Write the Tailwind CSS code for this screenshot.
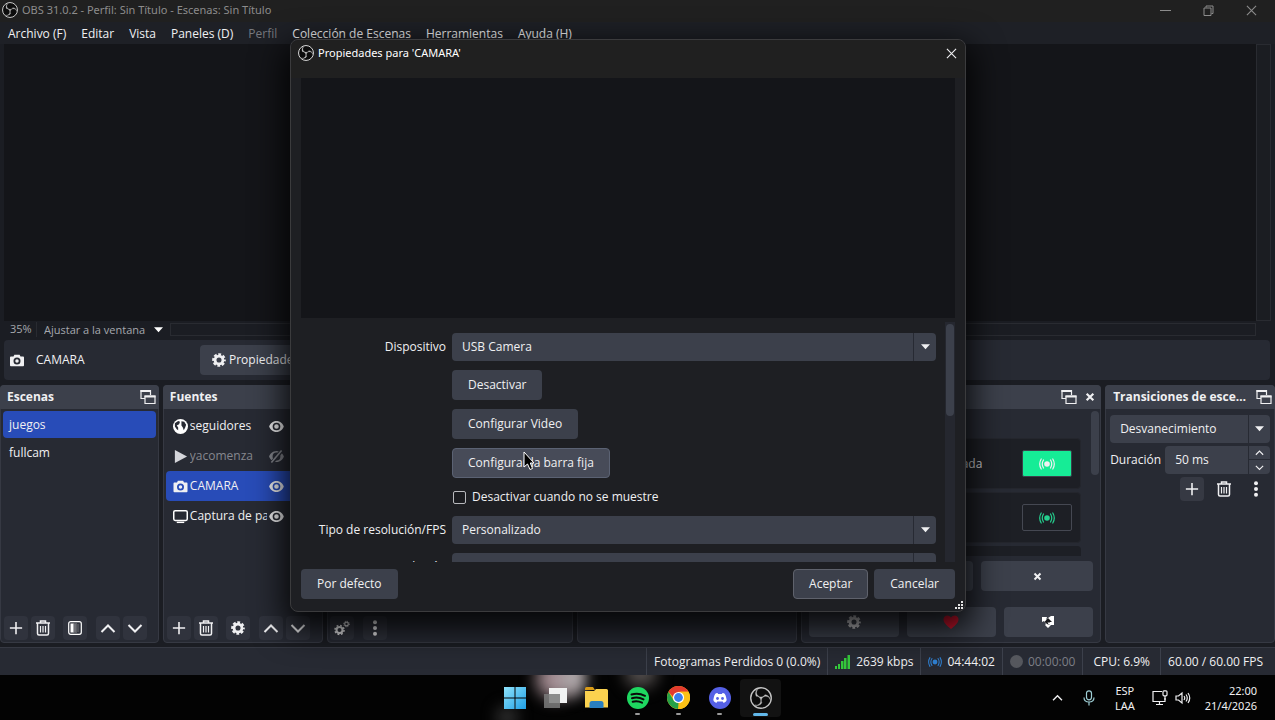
<!DOCTYPE html>
<html lang="es">
<head>
  <meta charset="UTF-8">
  <meta name="viewport" content="width=device-width, initial-scale=1">
  <title>OBS 31.0.2 - Perfil: Sin Título - Escenas: Sin Título</title>
  <script src="https://cdn.jsdelivr.net/npm/@tailwindcss/browser@4"></script>
</head>
<body class="relative min-h-screen flex flex-col overflow-hidden bg-[#1b1d23] text-[#f0f0f2] font-['Open_Sans',sans-serif] text-xs">

  <!-- shared icons -->
  <svg class="hidden">
    <symbol id="obs" viewBox="0 0 24 24">
      <circle cx="12" cy="12" r="11.200" fill="#0c0c0c" stroke="currentColor" stroke-width="1.500"/>
      <path fill="currentColor" stroke="currentColor" stroke-width=".4" d="M6.182 5.990c.352-1.698 1.503-3.229 3.050-3.996-.269.273-.595.483-.844.780-1.020 1.100-1.480 2.692-1.199 4.156.355 2.235 2.455 4.060 4.732 4.028 1.765.079 3.485-.937 4.348-2.468 1.848.063 3.645 1.017 4.700 2.548.540.799.962 1.736.991 2.711-.342-1.295-1.202-2.446-2.375-3.095-1.135-.639-2.529-.802-3.772-.425-1.560.448-2.849 1.723-3.293 3.293-.377 1.250-.216 2.628.377 3.772-.825 1.429-2.315 2.449-3.932 2.756-1.244.261-2.551.059-3.709-.464 1.036.302 2.161.355 3.191-.011 1.381-.457 2.522-1.567 3.024-2.935.556-1.490.345-3.261-.591-4.540-.700-1.007-1.803-1.717-3.002-1.969-.380-.068-.764-.098-1.148-.134-.611-1.231-.834-2.660-.528-3.996z"/>
    </symbol>
    <symbol id="camera" viewBox="0 0 16 16">
      <path fill="currentColor" fill-rule="evenodd" d="M5 2h6l1 2h3a1 1 0 0 1 1 1v9a1 1 0 0 1-1 1H1a1 1 0 0 1-1-1V5a1 1 0 0 1 1-1h3zM8 5a4 4 0 1 0 0 8 4 4 0 0 0 0-8zm0 2a2 2 0 1 1 0 4 2 2 0 0 1 0-4z"/>
    </symbol>
    <symbol id="gear" viewBox="0 0 16 16">
      <circle cx="8" cy="8" r="4.500" fill="none" stroke="currentColor" stroke-width="3.200"/>
      <circle cx="8" cy="8" r="6.500" fill="none" stroke="currentColor" stroke-width="2.600" stroke-dasharray="3.200 1.905" stroke-dashoffset="1.600"/>
    </symbol>
    <symbol id="popout" viewBox="0 0 16 16">
      <path fill="none" stroke="currentColor" stroke-width="1.200" d="M5 9.500H1V1.500h9.500V6M5 7h10v7.500H5z"/>
      <path fill="currentColor" d="M.5 1h10.500v2H.5zM4.500 6.500h11v2h-11z"/>
    </symbol>
    <symbol id="plus" viewBox="0 0 16 16">
      <path fill="none" stroke="currentColor" stroke-width="1.800" d="M8 1v14M1 8h14"/>
    </symbol>
    <symbol id="trash" viewBox="0 0 16 16">
      <path fill="none" stroke="currentColor" stroke-width="1.500" d="M1 3h14M5.500 2.500V1h5v1.500M2.500 3.500v10q0 1.500 1.500 1.500h8q1.500 0 1.500-1.500v-10"/>
      <path stroke="currentColor" stroke-width="1.200" d="M5.500 6v6.500M8 6v6.500M10.500 6v6.500"/>
    </symbol>
    <symbol id="up" viewBox="0 0 16 16"><path fill="none" stroke="currentColor" stroke-width="2" d="M1.500 12 8 5.500l6.500 6.500"/></symbol>
    <symbol id="down" viewBox="0 0 16 16"><path fill="none" stroke="currentColor" stroke-width="2" d="M1.500 5 8 11.500 14.500 5"/></symbol>
    <symbol id="dots" viewBox="0 0 16 16">
      <g fill="currentColor"><circle cx="8" cy="2.200" r="2"/><circle cx="8" cy="8" r="2"/><circle cx="8" cy="13.800" r="2"/></g>
    </symbol>
    <symbol id="eye" viewBox="0 0 16 12">
      <path fill="currentColor" fill-rule="evenodd" d="M8 0c4 0 7 3 8 6-1 3-4 6-8 6S1 9 0 6c1-3 4-6 8-6zm0 1.800a4.200 4.200 0 1 0 0 8.400 4.200 4.200 0 0 0 0-8.400zM8 3.500a2.500 2.500 0 1 1 0 5 2.500 2.500 0 0 1 0-5z"/>
    </symbol>
    <symbol id="live" viewBox="0 0 16 12">
      <circle cx="8" cy="6" r="2.800" fill="currentColor"/>
      <path fill="none" stroke="currentColor" stroke-width="1.200" stroke-linecap="round" d="M4.500 2q-2.500 4 0 8M11.500 2q2.500 4 0 8M2.200 1q-3 5 0 10M13.800 1q3 5 0 10"/>
    </symbol>
    <symbol id="cross" viewBox="0 0 12 12"><path stroke="currentColor" stroke-width="2.600" d="M2 2l8 8M10 2l-8 8"/></symbol>
    <symbol id="thin-cross" viewBox="0 0 12 12"><path stroke="currentColor" stroke-width="1.200" d="M1 1l10 10M11 1L1 11"/></symbol>
    <symbol id="caret" viewBox="0 0 10 6"><path fill="currentColor" d="M0 0h10L5 5.500z"/></symbol>
  </svg>

  <!-- main window -->
  <header class="h-[22px] pb-0.5 flex items-center bg-[#202020] text-[#8c8c8c]">
    <svg class="ml-0.5 w-4 h-4 text-[#c8c8c8]"><use href="#obs"/></svg>
    <h1 class="ml-1 text-[11px] font-['Noto_Sans',sans-serif]">OBS 31.0.2 - Perfil: Sin Título - Escenas: Sin Título</h1>
    <div class="ml-auto flex items-center pr-[18px] gap-8">
      <button aria-label="Minimizar" class="w-[11px] h-3 flex items-center"><span class="w-full h-px bg-[#8c8c8c]"></span></button>
      <button aria-label="Restaurar"><svg class="w-[11px] h-[11px]" viewBox="0 0 11 11" fill="none" stroke="currentColor"><path d="M1 3h7v7.500H1zM3 2.500V1h7v7.500H8.500"/></svg></button>
      <button aria-label="Cerrar"><svg class="w-[11px] h-[11px]"><use href="#thin-cross"/></svg></button>
    </div>
  </header>

  <nav class="h-[22px] flex items-center gap-[15px] pl-2 pt-px bg-[#1e2026]">
    <button>Archivo (F)</button>
    <button>Editar</button>
    <button>Vista</button>
    <button>Paneles (D)</button>
    <button class="text-[#77797f]">Perfil</button>
    <button>Colección de Escenas</button>
    <button>Herramientas</button>
    <button>Ayuda (H)</button>
  </nav>

  <main class="flex-1 flex flex-col">
    <section class="flex-1 flex mx-1">
      <div class="flex-1 bg-[#141519]"></div>
      <div class="w-[15px] border border-[#292b31] bg-[#1b1d22]"></div>
    </section>

    <div class="h-[19px] pb-0.5 flex items-center ml-1 mr-[19px] text-[11px] text-[#a6a8ae]">
      <span class="w-[33px] pl-1.5 border-r border-[#292b31]">35%</span>
      <div class="relative w-[133px] h-[15px] flex items-center">
        <select aria-label="Escala" class="appearance-none w-full pl-[7px] text-[11px] leading-[15px]"><option>Ajustar a la ventana</option></select>
        <svg class="pointer-events-none absolute right-[7px] w-[9px] h-[6px] text-white"><use href="#caret"/></svg>
      </div>
      <div class="flex-1 h-[13px] border border-[#292b31]"></div>
    </div>

    <section class="h-10 flex items-center ml-1 mr-[5px] rounded bg-[#272a33]">
      <svg class="ml-1.5 w-3.5 h-3.5"><use href="#camera"/></svg>
      <span class="ml-3 w-[164px]">CAMARA</span>
      <button class="h-[30px] px-3 rounded flex items-center gap-[3px] bg-[#3c404b]"><svg class="w-3.5 h-3.5"><use href="#gear"/></svg>Propiedades</button>
    </section>

    <!-- docks -->
    <section class="mt-[5px] h-[258px] grid grid-cols-[minmax(0,159fr)_minmax(0,160fr)_minmax(0,246fr)_minmax(0,221fr)_minmax(0,300fr)_minmax(0,170fr)] gap-1">
      <section class="flex flex-col rounded border border-[#363943] bg-[#272a33]">
        <h2 class="h-6 -mx-px -mt-px pl-[7px] pr-[3px] flex items-center justify-between rounded-t bg-[#3c404b] font-bold">Escenas
          <button aria-label="Desacoplar Escenas"><svg class="w-4 h-4"><use href="#popout"/></svg></button>
        </h2>
        <ul class="flex-1 px-0.5 pt-0.5">
          <li class="h-[27px] px-1.5 flex items-center rounded bg-[#284cb8]">juegos</li>
          <li class="h-[29px] px-1.5 flex items-center">fullcam</li>
        </ul>
        <div class="flex items-center pl-[3px] pb-0.5">
          <button aria-label="Añadir escena" class="w-6 h-6 rounded grid place-items-center bg-[#30333d]"><svg class="w-3.5 h-3.5"><use href="#plus"/></svg></button>
          <button aria-label="Eliminar escena" class="ml-[3px] w-6 h-6 rounded grid place-items-center bg-[#30333d]"><svg class="w-4 h-4"><use href="#trash"/></svg></button>
          <button aria-label="Filtros" class="ml-2 w-6 h-6 rounded grid place-items-center bg-[#30333d]">
            <svg class="w-3.5 h-3.5" viewBox="0 0 14 14"><rect x=".7" y=".7" width="12.600" height="12.600" rx="2" fill="none" stroke="#fff" stroke-width="1.200"/><path fill="#fff" d="M2.500 2.500h3v9h-3z"/><path stroke="#ddd" stroke-dasharray="1 1" d="M6 2.500v9M8 2.500v9"/><path stroke="#aaa" stroke-dasharray="1 1" d="M7 3.500v8M10 3.500v8"/></svg>
          </button>
          <button aria-label="Subir escena" class="ml-[9px] w-6 h-6 rounded grid place-items-center bg-[#30333d]"><svg class="w-4 h-4"><use href="#up"/></svg></button>
          <button aria-label="Bajar escena" class="ml-[3px] w-6 h-6 rounded grid place-items-center bg-[#30333d]"><svg class="w-4 h-4"><use href="#down"/></svg></button>
        </div>
      </section>

      <section class="flex flex-col rounded border border-[#363943] bg-[#272a33]">
        <h2 class="h-6 -mx-px -mt-px px-[7px] flex items-center rounded-t bg-[#3c404b] font-bold">Fuentes</h2>
        <ul class="flex-1 pl-0.5 pt-0.5">
          <li class="h-[30px] pl-[7px] pr-[38px] flex items-center gap-0.5">
            <svg class="shrink-0 w-[15px] h-[15px]" viewBox="0 0 16 16"><circle cx="8" cy="8" r="8" fill="#fff"/><path fill="#272a33" d="M2 4.500 5.500 2l2 1-1 2.500L4 7l1.500 2v3L4 11 2 8zM9 2.500l3 .5 2 3-1 3-1.500 3-1-3L9 7z"/></svg>
            <span class="flex-1 overflow-hidden whitespace-nowrap">seguidores</span>
            <button aria-label="Ocultar seguidores"><svg class="w-[15px] h-[11px]"><use href="#eye"/></svg></button>
          </li>
          <li class="h-[30px] pl-[7px] pr-[38px] flex items-center gap-0.5 text-[#85878e]">
            <svg class="shrink-0 w-[15px] h-[15px]" viewBox="0 0 16 16"><path fill="#d4d5da" d="M2 1v14l13-7z"/></svg>
            <span class="flex-1 overflow-hidden whitespace-nowrap">yacomenza</span>
            <button aria-label="Mostrar yacomenza"><svg class="w-[15px] h-[13px]" viewBox="0 0 16 14"><g transform="translate(0 1)"><path fill="currentColor" fill-rule="evenodd" d="M8 0c4 0 7 3 8 6-1 3-4 6-8 6S1 9 0 6c1-3 4-6 8-6zm0 1.800a4.200 4.200 0 1 0 0 8.400 4.200 4.200 0 0 0 0-8.400z"/></g><path stroke="#272a33" stroke-width="4" d="M3 14 14 0"/><path stroke="currentColor" stroke-width="1.700" d="M2.500 13.500 13.500.5"/></svg></button>
          </li>
          <li class="h-[30px] pl-[7px] pr-[38px] flex items-center gap-0.5 rounded bg-[#284cb8]">
            <svg class="shrink-0 w-[15px] h-3.5"><use href="#camera"/></svg>
            <span class="flex-1 overflow-hidden whitespace-nowrap">CAMARA</span>
            <button aria-label="Ocultar CAMARA"><svg class="w-[15px] h-[11px]"><use href="#eye"/></svg></button>
          </li>
          <li class="h-[30px] pl-[7px] pr-[38px] flex items-center gap-0.5">
            <svg class="shrink-0 w-[15px] h-[15px]" viewBox="0 0 16 16"><rect x=".8" y="1.800" width="14.400" height="10.400" rx="1.500" fill="none" stroke="#fff" stroke-width="1.600"/><path fill="#fff" d="M4 13.500h8V15H4z"/></svg>
            <span class="flex-1 overflow-hidden whitespace-nowrap">Captura de pantalla</span>
            <button aria-label="Ocultar Captura de pantalla"><svg class="w-[15px] h-[11px]"><use href="#eye"/></svg></button>
          </li>
        </ul>
        <div class="flex items-center pl-[3px] pb-0.5">
          <button aria-label="Añadir fuente" class="w-6 h-6 rounded grid place-items-center bg-[#30333d]"><svg class="w-3.5 h-3.5"><use href="#plus"/></svg></button>
          <button aria-label="Eliminar fuente" class="ml-[3px] w-6 h-6 rounded grid place-items-center bg-[#30333d]"><svg class="w-4 h-4"><use href="#trash"/></svg></button>
          <button aria-label="Propiedades de la fuente" class="ml-2 w-6 h-6 rounded grid place-items-center bg-[#30333d]"><svg class="w-3.5 h-3.5"><use href="#gear"/></svg></button>
          <button aria-label="Subir fuente" class="ml-[9px] w-6 h-6 rounded grid place-items-center bg-[#30333d]"><svg class="w-4 h-4"><use href="#up"/></svg></button>
          <button aria-label="Bajar fuente" class="ml-[3px] w-6 h-6 rounded grid place-items-center bg-[#30333d]"><svg class="w-4 h-4"><use href="#down"/></svg></button>
        </div>
      </section>

      <section class="flex flex-col justify-end rounded border border-[#363943] bg-[#272a33]">
        <div class="flex items-center gap-[9px] pl-0.5 pb-0.5">
          <button aria-label="Propiedades de audio" class="w-6 h-6 rounded grid place-items-center bg-[#30333d]">
            <svg class="w-4 h-4" viewBox="0 0 16 16" fill="none" stroke="currentColor"><circle cx="5.500" cy="10" r="3" stroke-width="2"/><circle cx="5.500" cy="10" r="4.500" stroke-width="1.600" stroke-dasharray="1.800 1.734"/><circle cx="12.500" cy="4" r="1.800" stroke-width="1.200"/><circle cx="12.500" cy="4" r="2.800" stroke-width="1" stroke-dasharray="1.100 1.099"/></svg>
          </button>
          <button aria-label="Menú del mezclador" class="w-6 h-6 rounded grid place-items-center bg-[#30333d]"><svg class="w-4 h-4"><use href="#dots"/></svg></button>
        </div>
      </section>

      <section class="rounded border border-[#363943] bg-[#272a33]"></section>

      <section class="flex flex-col rounded border border-[#363943] bg-[#272a33]">
        <h2 class="h-6 -mx-px -mt-px pr-1.5 flex items-center justify-end gap-2 rounded-t bg-[#3c404b]">
          <button aria-label="Desacoplar panel"><svg class="w-4 h-4"><use href="#popout"/></svg></button>
          <button aria-label="Cerrar panel"><svg class="w-2.5 h-2.5"><use href="#cross"/></svg></button>
        </h2>
        <div class="h-[147px] flex justify-between pl-2 pr-px pt-0.5">
          <div class="w-[271px] pt-[27px] flex flex-col gap-[3px] overflow-hidden">
            <div class="shrink-0 h-[51px] flex items-center justify-end gap-10 pr-2 rounded border border-[#24262d] bg-[#1d1f25]">
              <span class="text-[#d0d0d4]">Activada</span>
              <button aria-label="Emitir" class="w-[50px] h-[27px] rounded-xs grid place-items-center border border-[#3c404b] bg-[#16ec96]"><svg class="w-4 h-3"><use href="#live"/></svg></button>
            </div>
            <div class="shrink-0 h-[51px] flex items-center justify-end pr-2 rounded border border-[#24262d] bg-[#1d1f25]">
              <button aria-label="Emitir" class="w-[50px] h-[27px] rounded-xs grid place-items-center border border-[#454852] text-[#25cf8e]"><svg class="w-4 h-3"><use href="#live"/></svg></button>
            </div>
            <div class="shrink-0 h-[51px] rounded bg-[#1d1f25]"></div>
          </div>
          <div class="w-2 h-16 rounded-sm bg-[#3c404b]"></div>
        </div>
        <div class="flex gap-2 px-[7px] pt-[5px]">
          <button aria-label="Añadir" class="flex-1 h-[30px] rounded bg-[#3c404b]"></button>
          <button aria-label="Quitar" class="w-28 h-[30px] rounded grid place-items-center bg-[#3c404b]"><svg class="w-[9px] h-[9px]"><use href="#cross"/></svg></button>
        </div>
        <div class="mt-auto mb-[5px] grid grid-cols-3 gap-2 px-[7px]">
          <button aria-label="Ajustes" class="h-[30px] rounded grid place-items-center bg-[#3c404b]"><svg class="w-3.5 h-3.5 text-[#c8c8cc]"><use href="#gear"/></svg></button>
          <button aria-label="Donar" class="h-[30px] rounded grid place-items-center bg-[#3c404b]"><svg class="w-4 h-3.5" viewBox="0 0 16 14"><path fill="#d3152f" d="M8 14C3 10 .5 7.500.5 4.300.5 0 6-1 8 2.600 10-1 15.500 0 15.500 4.300 15.500 7.500 13 10 8 14z"/></svg></button>
          <button aria-label="Actualizar" class="h-[30px] rounded grid place-items-center bg-[#3c404b]"><svg class="w-3 h-3.5" viewBox="0 0 12 14"><path fill="#fff" d="M0 2h5L4 5l2-2 3-2h3v9H9l-3 3-3-3 1-1-2-3-2 1z"/><path fill="#16171b" d="m6 3 4 4H8l-.5 3L5 9 2.500 7z"/><path fill="#fff" d="M5.500 7.500h4L7 10z"/></svg></button>
        </div>
      </section>

      <section class="rounded border border-[#363943] bg-[#272a33]">
        <h2 class="h-6 -mx-px -mt-px pl-2 flex items-center gap-1.5 rounded-t bg-[#3c404b] font-bold">
          <span class="flex-1 truncate">Transiciones de escenas</span>
          <button aria-label="Desacoplar Transiciones" class="mr-[3px]"><svg class="w-4 h-4"><use href="#popout"/></svg></button>
        </h2>
        <div class="px-1 pt-1.5 flex flex-col gap-[3px]">
          <div class="relative flex items-center rounded bg-[#3c404b]">
            <select aria-label="Transición" class="appearance-none w-full h-7 px-2.5"><option>Desvanecimiento</option></select>
            <span class="pointer-events-none absolute right-0 h-full w-[22px] grid place-items-center border-l border-[#272a33]"><svg class="w-[9px] h-[6px]"><use href="#caret"/></svg></span>
          </div>
          <div class="flex items-center gap-1">
            <label for="duration">Duración</label>
            <div class="flex-1 min-w-0 h-7 flex rounded bg-[#3c404b]">
              <input id="duration" type="text" value="50 ms" class="flex-1 min-w-0 px-2.5 outline-none">
              <div class="shrink-0 w-[22px] grid grid-rows-2 divide-y divide-[#272a33] border-l border-[#272a33]">
                <button aria-label="Aumentar duración" class="grid place-items-center"><svg class="w-[9px] h-[9px]"><use href="#up"/></svg></button>
                <button aria-label="Reducir duración" class="grid place-items-center"><svg class="w-[9px] h-[9px]"><use href="#down"/></svg></button>
              </div>
            </div>
          </div>
          <div class="flex justify-end gap-2 pr-0.5">
            <button aria-label="Añadir transición" class="w-6 h-6 rounded grid place-items-center bg-[#363943]"><svg class="w-3.5 h-3.5"><use href="#plus"/></svg></button>
            <button aria-label="Eliminar transición" class="w-6 h-6 grid place-items-center"><svg class="w-4 h-4"><use href="#trash"/></svg></button>
            <button aria-label="Menú de transición" class="w-6 h-6 grid place-items-center"><svg class="w-4 h-4"><use href="#dots"/></svg></button>
          </div>
        </div>
      </section>
    </section>
  </main>

  <footer class="mt-1 h-7 flex justify-end border-t border-[#363943] bg-[#272a33] divide-x divide-[#3c404b]">
    <span></span>
    <span class="px-[7px] flex items-center">Fotogramas Perdidos 0 (0.0%)</span>
    <span class="px-[7px] flex items-center gap-1.5">
      <svg class="w-[15px] h-[14px]" viewBox="0 0 15 14" fill="#35c93c"><path d="M0 11h2v3H0zM3 9h2v5H3zM6 6h2.500v8H6zM9 3h2.500v11H9zM12.500 0H15v14h-2.500z"/></svg>2639 kbps
    </span>
    <span class="px-[7px] flex items-center gap-[5px]"><svg class="w-[14px] h-3 text-[#2f7fd0]"><use href="#live"/></svg>04:44:02</span>
    <span class="px-[7px] flex items-center gap-[5px] text-[#7c7e85]"><i class="w-[13px] h-[13px] rounded-full bg-[#55575d]"></i>00:00:00</span>
    <span class="px-2.5 flex items-center">CPU: 6.9%</span>
    <span class="pl-[7px] pr-3 flex items-center">60.00 / 60.00 FPS</span>
  </footer>

  <!-- taskbar -->
  <div class="relative h-[45px] grid grid-cols-[1fr_auto_1fr] overflow-hidden bg-[#030303]">
    <i class="absolute left-[42%] -top-4 w-10 h-10 rounded-full bg-[#a0898f] blur-sm"></i>
    <i class="absolute left-[44%] -top-4 w-6 h-9 rounded-full bg-[#b5aeb0] blur-sm"></i>
    <i class="absolute left-[49%] -top-4 w-8 h-7 rounded-full bg-[#55504f] blur-sm"></i>
    <i class="absolute left-[39%] top-8 w-5 h-5 rounded-full bg-[#3a3a3a] blur-sm"></i>
    <div class="relative col-start-2 flex items-center">
      <button aria-label="Inicio" class="w-[41px] h-[45px] grid place-items-center">
        <svg class="w-[22px] h-[22px]" viewBox="0 0 22 22"><defs><linearGradient id="win" x1="0" y1="0" x2="1" y2="1"><stop stop-color="#8fe3fb"/><stop offset="1" stop-color="#1f9fe6"/></linearGradient></defs><path fill="url(#win)" d="M0 0h10.500v10.500H0zM11.500 0H22v10.500H11.500zM0 11.500h10.500V22H0zM11.500 11.500H22V22H11.500z"/></svg>
      </button>
      <button aria-label="Vista de tareas" class="w-[41px] h-[45px] grid place-items-center">
        <svg class="w-[23px] h-[22px]" viewBox="0 0 23 22"><path fill="#f2f2f2" d="M5 1h18v15H5z"/><path fill="#7b7b7b" fill-opacity=".85" d="M0 7h16v14H0z"/></svg>
      </button>
      <button aria-label="Explorador de archivos" class="w-[41px] h-[45px] grid place-items-center">
        <svg class="w-[23px] h-[21px]" viewBox="0 0 23 21"><path fill="#d99b17" d="M0 1.500Q0 0 1.500 0H8l2 3H0z"/><path fill="#fbd24f" d="M0 4h9l2-2h10.500Q23 2 23 3.500v17H0z"/><path fill="#2a7fc0" d="M4.500 21v-4.500Q4.500 14 7 14h9q2.500 0 2.500 2.500V21z"/></svg>
      </button>
      <button aria-label="Spotify" class="relative w-[41px] h-[45px] grid place-items-center">
        <svg class="w-[22px] h-[22px]" viewBox="0 0 22 22"><circle cx="11" cy="11" r="11" fill="#1ed760"/><path fill="none" stroke="#0a0a0a" stroke-linecap="round" stroke-width="2" d="M4.500 7.500q7-2 13.500 1.300M5 11.200q6-1.700 11.500 1.200M5.700 14.700q5-1.200 9.300 1"/></svg>
        <i class="absolute bottom-[5px] w-[5px] h-0.5 rounded-full bg-[#9a9a9a]"></i>
      </button>
      <button aria-label="Chrome" class="relative w-[41px] h-[45px] grid place-items-center">
        <svg class="w-[23px] h-[23px]" viewBox="0 0 24 24"><circle cx="12" cy="12" r="12" fill="#fbc116"/><path fill="#e33b2e" d="M1.600 6A12 12 0 0 1 22.400 6H12v12z"/><path fill="#26a147" d="M1.600 6 7 15l5 3-.5 6A12 12 0 0 1 1.600 6z"/><path fill="#fbc116" d="M22.400 6A12 12 0 0 1 11.500 24l6-9L14 6z"/><circle cx="12" cy="12" r="5.800" fill="#fff"/><circle cx="12" cy="12" r="4.600" fill="#3b7ded"/></svg>
        <i class="absolute bottom-[5px] w-[5px] h-0.5 rounded-full bg-[#9a9a9a]"></i>
      </button>
      <button aria-label="Discord" class="relative w-[41px] h-[45px] grid place-items-center">
        <svg class="w-[22px] h-[22px]" viewBox="0 0 22 22"><circle cx="11" cy="11" r="11" fill="#5560e6"/><path fill="#fff" d="M8.500 6 7 6.300Q5.300 7 4.300 13q0 1.500 3 3l1-1.500h5.400l1 1.500q3-1.500 3-3-1-6-2.700-6.700L13.500 6l-.6 1H9.100z"/><circle cx="8.500" cy="11.500" r="1.400" fill="#5560e6"/><circle cx="13.500" cy="11.500" r="1.400" fill="#5560e6"/></svg>
        <i class="absolute bottom-[5px] w-[5px] h-0.5 rounded-full bg-[#9a9a9a]"></i>
      </button>
      <button aria-label="OBS Studio" class="relative w-[41px] h-[38px] rounded grid place-items-center bg-[#121212]">
        <svg class="w-[22px] h-[22px] text-[#c4c4c4]"><use href="#obs"/></svg>
        <i class="absolute bottom-px w-[15px] h-[3px] rounded-full bg-[#62b8ea]"></i>
      </button>
    </div>
    <div class="flex items-center justify-end pr-[18px] text-[11px] leading-[15px] font-['Noto_Sans',sans-serif]">
      <button aria-label="Iconos ocultos"><svg class="w-[11px] h-[11px]"><use href="#up"/></svg></button>
      <button aria-label="Micrófono" class="ml-5"><svg class="w-3 h-4 text-[#9fcfd6]" viewBox="0 0 12 16" fill="none" stroke="currentColor" stroke-width="1.200"><rect x="3.500" y=".8" width="5" height="9" rx="2.500"/><path d="M1 7.500Q1 12 6 12t5-4.500M6 12v3.500"/></svg></button>
      <button class="ml-5 text-center">ESP<br>LAA</button>
      <button aria-label="Red" class="ml-[17px]"><svg class="w-4 h-4" viewBox="0 0 16 16" fill="none" stroke="currentColor" stroke-width="1.200"><path d="M10 1.500H1v10h12V8M4 14.500h7M7.500 12v2.500"/><rect x="11" y=".8" width="4" height="5" rx="1"/><path d="M13 6v4"/></svg></button>
      <button aria-label="Volumen" class="ml-[7px]"><svg class="w-4 h-4" viewBox="0 0 16 16" fill="none" stroke="currentColor" stroke-width="1.200"><path d="M1 6h2.500L7 3v10l-3.500-3H1zM9 6q1.500 2 0 4M11 4.500q2.500 3.500 0 7M13 3q3.500 5 0 10"/></svg></button>
      <button class="ml-3.5 text-right">22:00<br>21/4/2026</button>
    </div>
  </div>

  <!-- properties dialog -->
  <div role="dialog" aria-labelledby="dialog-title" class="absolute left-[290px] top-[39px] w-[676px] h-[573px] flex flex-col rounded-lg border border-[#3b3b3d] bg-[#1e1f23] shadow-[0_12px_32px_6px_rgba(0,0,0,0.85)]">
    <div class="h-[38px] pb-3 px-2 flex items-center rounded-t-lg bg-[#202020]">
      <svg class="-ml-px w-4 h-4 text-[#d8d8d8]"><use href="#obs"/></svg>
      <h2 id="dialog-title" class="ml-1 text-[11px] font-['Noto_Sans',sans-serif] text-white">Propiedades para 'CAMARA'</h2>
      <button aria-label="Cerrar" class="ml-auto"><svg class="w-[11px] h-[11px]"><use href="#thin-cross"/></svg></button>
    </div>
    <div class="flex-1 mx-2.5 bg-[#141519]"></div>
    <div class="mt-1 mx-2.5 h-[240px] flex overflow-hidden">
      <div class="flex-1 pt-[11px] flex flex-col gap-[9px]">
        <div class="shrink-0 flex items-center gap-1.5">
          <label for="device" class="w-[145px] text-right">Dispositivo</label>
          <div class="relative flex-1 flex items-center rounded bg-[#3c404b]">
            <select id="device" class="appearance-none w-full h-7 px-2.5"><option>USB Camera</option></select>
            <span class="pointer-events-none absolute right-0 h-full w-[23px] grid place-items-center border-l border-[#272a33]"><svg class="w-[9px] h-[6px]"><use href="#caret"/></svg></span>
          </div>
        </div>
        <button class="shrink-0 self-start ml-[151px] h-[30px] px-4 rounded bg-[#3c404b]">Desactivar</button>
        <button class="shrink-0 self-start ml-[151px] h-[30px] px-4 rounded bg-[#3c404b]">Configurar Video</button>
        <button class="shrink-0 self-start ml-[151px] h-[30px] px-[15px] rounded border border-[#5b6273] bg-[#474b58]">Configurar la barra fija</button>
        <label class="shrink-0 ml-[152px] h-5 flex items-center gap-1.5"><input type="checkbox" class="appearance-none w-[13px] h-[13px] rounded-xs border border-[#b8b9bd] bg-[#1b1c20]">Desactivar cuando no se muestre</label>
        <div class="shrink-0 flex items-center gap-1.5">
          <label for="fps" class="w-[145px] text-right">Tipo de resolución/FPS</label>
          <div class="relative flex-1 flex items-center rounded bg-[#3c404b]">
            <select id="fps" class="appearance-none w-full h-7 px-2.5"><option>Personalizado</option></select>
            <span class="pointer-events-none absolute right-0 h-full w-[23px] grid place-items-center border-l border-[#272a33]"><svg class="w-[9px] h-[6px]"><use href="#caret"/></svg></span>
          </div>
        </div>
        <div class="shrink-0 flex items-center gap-1.5">
          <label for="resolution" class="w-[145px] text-right">Resolución</label>
          <div class="relative flex-1 flex items-center rounded bg-[#3c404b]">
            <select id="resolution" class="appearance-none w-full h-7 px-2.5"><option></option></select>
            <span class="pointer-events-none absolute right-0 h-full w-[23px] border-l border-[#272a33]"></span>
          </div>
        </div>
      </div>
      <div class="ml-[9px] w-2.5 h-full bg-[#25272f]"><div class="mx-px mt-0.5 h-[92px] rounded-sm bg-[#3c404b]"></div></div>
    </div>
    <div class="mt-[7px] mb-3 mx-2.5 flex gap-1.5">
      <button class="mr-auto h-[30px] px-4 rounded bg-[#3c404b]">Por defecto</button>
      <button class="h-[30px] px-[15px] rounded border border-[#5f626c] bg-[#3c404b]">Aceptar</button>
      <button class="h-[30px] px-4 rounded bg-[#3c404b]">Cancelar</button>
    </div>
    <svg class="absolute right-0.5 bottom-0.5 w-2 h-2" viewBox="0 0 8 8" fill="#e4e4e4"><path d="M0 6h2v2H0zM3 6h2v2H3zM6 6h2v2H6zM3 3h2v2H3zM6 3h2v2H6zM6 0h2v2H6z"/></svg>
    <svg class="pointer-events-none absolute left-[232px] top-[411px] w-3 h-5" viewBox="0 0 12 20"><path fill="#000" stroke="#fff" d="M1 1v15l3.500-3L7 18.500l2.500-1L7.300 12H11z"/></svg>
  </div>

</body>
</html>
